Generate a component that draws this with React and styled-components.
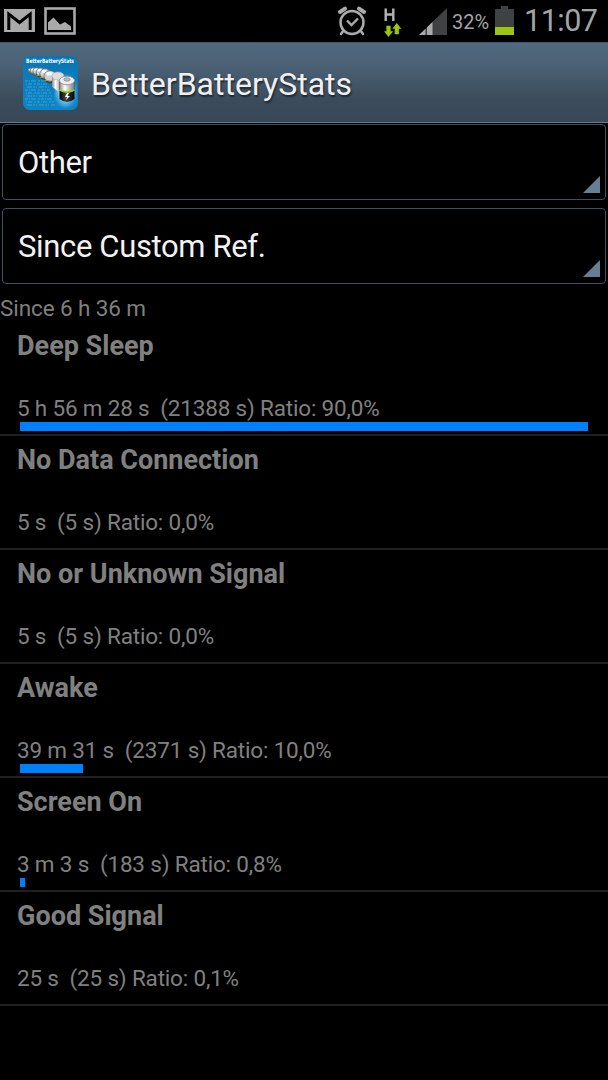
import React from "react";
import styled, { createGlobalStyle } from "styled-components";

const GlobalStyle = createGlobalStyle`
  * { box-sizing: border-box; }
  body { margin: 0; background: #000; font-family: Roboto, "Noto Sans", sans-serif; }
`;

const Screen = styled.main`
  width: 608px;
  height: 1080px;
  background: #000;
  display: flex;
  flex-direction: column;
  overflow: hidden;
  white-space: pre;
`;

const StatusBar = styled.div`
  height: 42px;
  flex: none;
  display: flex;
  justify-content: space-between;
  padding: 0 10px 0 4px;
  color: #a2a5a6;
`;

const Group = styled.div`
  display: flex;
  align-items: flex-start;
`;

const Glyph = styled.svg`
  display: block;
  flex: none;
  overflow: visible;
  margin-right: ${(p) => p.$gap || 0}px;
`;

const Percent = styled.span`
  font-size: 20px;
  line-height: 44px;
  width: 43px;
`;

const Clock = styled.span`
  font-size: 30.5px;
  line-height: 42px;
  width: 74px;
  letter-spacing: -0.5px;
`;

const Header = styled.header`
  height: 81px;
  flex: none;
  display: flex;
  align-items: center;
  padding: 0 23px;
  gap: 13px;
  background: linear-gradient(#50697e 0%, #4c6377 25%, #3b4b5b 72%, #384858 100%);
  border-top: 1px solid #46596a;
  border-bottom: 1px solid #647c90;
`;

const AppTitle = styled.h1`
  margin: 0;
  padding-top: 2px;
  color: #f0f0f0;
  font-size: 32px;
  font-weight: 400;
  line-height: 40px;
  text-shadow: 1px 2px 2px rgba(0, 0, 0, 0.55);
`;

const Spinners = styled.div`
  display: flex;
  flex-direction: column;
  gap: 8px;
  padding: 1px 2px 0;
`;

const SpinnerBox = styled.div`
  height: 76px;
  display: flex;
  align-items: flex-end;
  justify-content: space-between;
  padding: 0 5px 6px 15px;
  border: 1px solid #3b5161;
  border-radius: 4px;
  color: #f3f3f3;
`;

const SpinnerLabel = styled.span`
  font-size: 31px;
  line-height: 36px;
  align-self: center;
  padding-top: 7px;
  letter-spacing: -0.35px;
`;

const Since = styled.div`
  padding-top: 10px;
  height: 38px;
  font-size: 22.5px;
  line-height: 28px;
  color: #7f7f7f;
  letter-spacing: -0.1px;
`;

const Row = styled.li`
  height: 114px;
  border-bottom: 2px solid #202020;
  padding: 7px 17px 0;
  color: #808080;
`;

const RowTitle = styled.h2`
  margin: 0;
  font-size: 27px;
  font-weight: 700;
  line-height: 34px;
`;

const RowDetail = styled.p`
  margin: 31px 0 0;
  font-size: 22.5px;
  line-height: 28px;
  letter-spacing: -0.18px;
`;

const Bar = styled.div`
  margin: 0 0 0 3px;
  height: 9px;
  background: #0080ff;
`;

const List = styled.ul`
  margin: 0;
  padding: 0;
  list-style: none;
`;

const MailIcon = () => (
  <Glyph width="31" height="42" viewBox="0 0 31 42" $gap={9}>
    <rect x="0" y="9" width="31" height="23" fill="#a9abab" />
    <path d="M4.800 30V14L15.500 22.500L26.200 14V30" fill="none" stroke="#000" strokeWidth="3" />
  </Glyph>
);

const PictureIcon = () => (
  <Glyph width="32" height="42" viewBox="0 0 32 42">
    <rect x="1.500" y="8.500" width="29" height="25" fill="none" stroke="#a9abab" strokeWidth="2.600" />
    <path d="M4 30V22.500L9.500 17.500L16 24.500L21 22L27 26.500V30Z" fill="#a9abab" />
  </Glyph>
);

const AlarmIcon = () => (
  <Glyph width="30" height="42" viewBox="0 0 30 42" $gap={17}>
    <g fill="none" stroke="#a9abab">
      <circle cx="15" cy="22.500" r="11.500" strokeWidth="2.500" />
      <path d="M10 20.500L14.500 25L21 18.500" strokeWidth="2.400" />
      <path d="M3 12L8 8.700M27 12L22 8.700" strokeWidth="4" strokeLinecap="round" />
      <path d="M6.500 30.500L4 34M23.500 30.500L26 34" strokeWidth="2.600" strokeLinecap="round" />
    </g>
  </Glyph>
);

const DataIcon = () => (
  <Glyph width="18" height="42" viewBox="0 0 18 42" $gap={17}>
    <path d="M1.700 8.500V21M9.300 8.500V21M1.700 14.500H9.300" fill="none" stroke="#b1b3b4" strokeWidth="2.400" />
    <path d="M2.400 25.700H6.600V31.200H9.200L4.500 37L0 31.200H2.400Z" fill="#9cc511" />
    <path d="M10.700 34.200H14.900V28.700H17.300L12.800 23L8.300 28.700H10.700Z" fill="#9cc511" />
  </Glyph>
);

const SignalIcon = () => (
  <Glyph width="28" height="42" viewBox="0 0 28 42" $gap={5}>
    <path d="M0 35L28 8V35Z" fill="#3f4243" />
    <path d="M0 35L6.500 28.700V35ZM8 35V27.300L13.500 22V35Z" fill="#a9abab" />
  </Glyph>
);

const BatteryIcon = () => (
  <Glyph width="19" height="42" viewBox="0 0 19 42" $gap={10}>
    <path d="M0 9H6V6H13V9H19V35H0Z" fill="#3f4243" />
    <path d="M0 27H19V35H0Z" fill="#9cc511" />
  </Glyph>
);

const cells = [
  [7, 14.5, 2], [10, 15, 3], [13.5, 15.5, 3.8], [17.5, 16.5, 4.6], [22, 18, 5.4], [27, 20.5, 6.2],
];

const AppIcon = () => (
  <Glyph width="55" height="54" viewBox="0 0 55 54">
    <defs>
      <linearGradient id="blue" x1="0" y1="0" x2="0" y2="1">
        <stop offset="0" stopColor="#0876b5" />
        <stop offset="1" stopColor="#0e85c6" />
      </linearGradient>
      <linearGradient id="metal">
        <stop offset="0" stopColor="#858585" />
        <stop offset="0.35" stopColor="#fff" />
        <stop offset="1" stopColor="#777" />
      </linearGradient>
      <linearGradient id="dark">
        <stop offset="0" stopColor="#000" />
        <stop offset="0.4" stopColor="#444" />
        <stop offset="1" stopColor="#050505" />
      </linearGradient>
      <radialGradient id="halo">
        <stop offset="0.6" stopColor="#79c8ee" />
        <stop offset="1" stopColor="#60bdeb" stopOpacity="0.15" />
      </radialGradient>
    </defs>
    <rect width="55" height="54" rx="7" fill="url(#blue)" />
    <g stroke="#3ba3d4" strokeWidth="1.500" opacity="0.65">
      {[25, 28, 31, 34, 37, 40, 43, 46, 49].map((y, i) => (
        <path
          key={y}
          d={`M${2 + (i % 3)} ${y}H${24 + i}`}
          strokeDasharray={["3 1 1 1 5 2 2 1", "1 1 4 2 2 1 3 1", "5 1 2 1 1 2"][i % 3]}
        />
      ))}
    </g>
    <rect x="31" y="18" width="23" height="34" rx="11" fill="url(#halo)" />
    {cells.map(([x, y, r]) => (
      <g key={x}>
        <ellipse cx={x} cy={y + 0.5} rx={r} ry={r} fill="#3c3c3c" />
        <ellipse cx={x} cy={y - 0.6} rx={r - 0.2} ry={r * 0.85} fill="#cfcfcf" stroke="#666" strokeWidth="0.500" />
        <ellipse cx={x - 0.5} cy={y - r * 0.45} rx={r * 0.5} ry={r * 0.3} fill="#fff" />
        <path d={`M${x - r + 0.5} ${y + r * 0.6}l${r} 0.8`} stroke="#9cae45" strokeWidth="0.900" />
      </g>
    ))}
    <path d="M29 20V31L39 38V20Z" fill="url(#metal)" />
    <ellipse cx="35" cy="20" rx="6" ry="4" fill="#dedede" stroke="#aaa" strokeWidth="0.600" />
    <path d="M36.500 25V43Q44 49 51.500 43V25Z" fill="url(#dark)" />
    <path d="M36.500 24V34Q44 38 51.500 34V24Z" fill="url(#metal)" />
    <path d="M36.500 34Q44 38 51.500 34" fill="none" stroke="#9bd113" strokeWidth="1.800" />
    <ellipse cx="44" cy="24.500" rx="7.600" ry="4.300" fill="#ededed" stroke="#777" strokeWidth="0.700" />
    <ellipse cx="44" cy="23.500" rx="3.200" ry="1.700" fill="#bbb" stroke="#777" strokeWidth="0.600" />
    <path d="M44 37L42 41H44L43 44L47 40H44.500L46 37Z" fill="#fff" />
    <text x="3" y="6.800" fill="#fff" fontFamily="DejaVu Sans, sans-serif" fontWeight="700" fontSize="6" textLength="48" lengthAdjust="spacingAndGlyphs">BetterBatteryStats</text>
  </Glyph>
);

const Corner = () => (
  <Glyph width="17" height="17" viewBox="0 0 17 17">
    <path d="M17 0V17H0Z" fill="#667f94" />
  </Glyph>
);

const stats = [
  { name: "Deep Sleep", detail: "5 h 56 m 28 s  (21388 s) Ratio: 90,0%", bar: 568 },
  { name: "No Data Connection", detail: "5 s  (5 s) Ratio: 0,0%" },
  { name: "No or Unknown Signal", detail: "5 s  (5 s) Ratio: 0,0%" },
  { name: "Awake", detail: "39 m 31 s  (2371 s) Ratio: 10,0%", bar: 63 },
  { name: "Screen On", detail: "3 m 3 s  (183 s) Ratio: 0,8%", bar: 5 },
  { name: "Good Signal", detail: "25 s  (25 s) Ratio: 0,1%" },
];

export default function App() {
  return (
    <Screen>
      <GlobalStyle />
      <StatusBar>
        <Group>
          <MailIcon />
          <PictureIcon />
        </Group>
        <Group>
          <AlarmIcon />
          <DataIcon />
          <SignalIcon />
          <Percent>32%</Percent>
          <BatteryIcon />
          <Clock>11:07</Clock>
        </Group>
      </StatusBar>
      <Header>
        <AppIcon />
        <AppTitle>BetterBatteryStats</AppTitle>
      </Header>
      <Spinners>
        {["Other", "Since Custom Ref."].map((label) => (
          <SpinnerBox key={label}>
            <SpinnerLabel>{label}</SpinnerLabel>
            <Corner />
          </SpinnerBox>
        ))}
      </Spinners>
      <Since>Since 6 h 36 m</Since>
      <List>
        {stats.map((s) => (
          <Row key={s.name}>
            <RowTitle>{s.name}</RowTitle>
            <RowDetail>{s.detail}</RowDetail>
            {s.bar && <Bar style={{ width: s.bar }} />}
          </Row>
        ))}
      </List>
    </Screen>
  );
}
